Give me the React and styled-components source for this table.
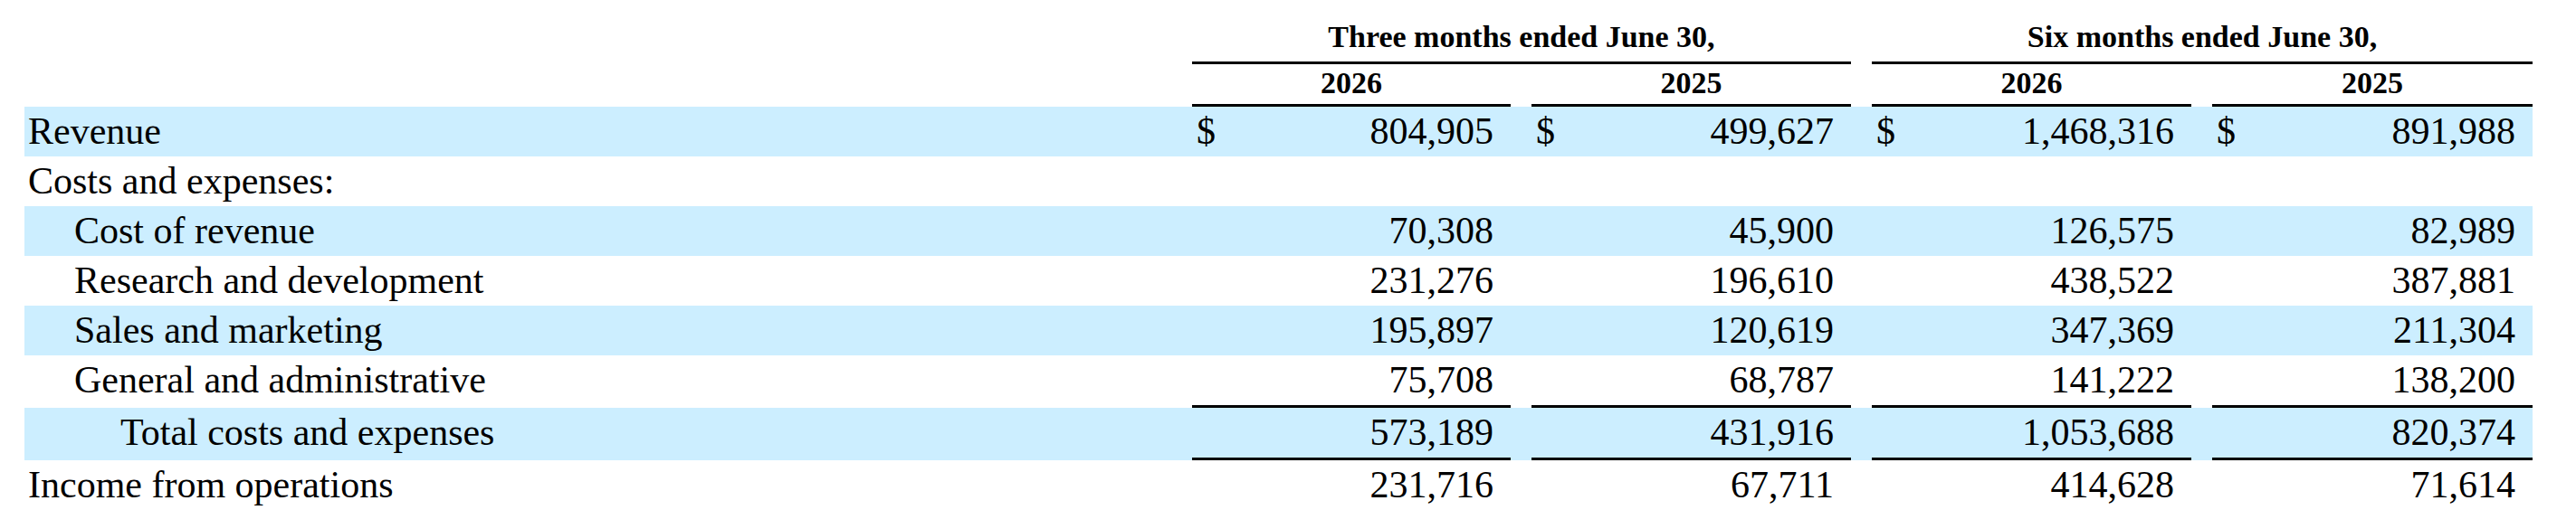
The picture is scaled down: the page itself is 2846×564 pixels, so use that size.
import styled, { createGlobalStyle } from "styled-components";
import * as React from "react";

const GlobalStyle = createGlobalStyle`
  html, body {
    margin: 0;
    padding: 0;
    background: #ffffff;
    overflow: hidden;
  }
  body {
    padding-left: 27px;
    font-family: "Liberation Serif", "Times New Roman", serif;
    color: #000;
  }
`;

const COLS = "1290px 352px 23px 353px 23px 353px 23px 354px";

const Table = styled.div`
  width: 2771px;
  display: flex;
  flex-direction: column;
`;

const HeadRow = styled.div`
  display: grid;
  grid-template-columns: ${COLS};
  font-weight: bold;
  font-size: 34px;
  line-height: 39px;
`;

const GroupTitle = styled.div`
  grid-column: ${(p) => p.$start} / span 3;
  height: 71px;
  box-sizing: border-box;
  padding-top: 21px;
  text-align: center;
  border-bottom: 3px solid #000;
`;

const YearCell = styled.div`
  grid-column: ${(p) => p.$col};
  height: 47px;
  box-sizing: border-box;
  padding-top: 1px;
  text-align: center;
  border-bottom: 3px solid #000;
`;

const Row = styled.div`
  display: grid;
  grid-template-columns: ${COLS};
  font-size: 42px;
  line-height: 55px;
  background: ${(p) => (p.$shaded ? "#cceeff" : "transparent")};
`;

const Label = styled.div`
  grid-column: 1;
  padding-left: ${(p) => 4 + p.$indent * 51}px;
  white-space: nowrap;
`;

const Cell = styled.div`
  grid-column: ${(p) => p.$col};
  display: flex;
  justify-content: space-between;
  padding: 0 19px 0 5px;
  height: ${(p) => (p.$rule ? 58 : 55)}px;
  box-sizing: border-box;
  border-bottom: ${(p) => (p.$rule ? "3px solid #000" : "none")};
`;

const Dollar = styled.span``;

const Amount = styled.span`
  text-align: right;
`;

const rows = [
  { label: "Revenue", indent: 0, dollar: true, values: ["804,905", "499,627", "1,468,316", "891,988"] },
  { label: "Costs and expenses:", indent: 0, values: null },
  { label: "Cost of revenue", indent: 1, values: ["70,308", "45,900", "126,575", "82,989"] },
  { label: "Research and development", indent: 1, values: ["231,276", "196,610", "438,522", "387,881"] },
  { label: "Sales and marketing", indent: 1, values: ["195,897", "120,619", "347,369", "211,304"] },
  { label: "General and administrative", indent: 1, rule: true, values: ["75,708", "68,787", "141,222", "138,200"] },
  { label: "Total costs and expenses", indent: 2, rule: true, values: ["573,189", "431,916", "1,053,688", "820,374"] },
  { label: "Income from operations", indent: 0, values: ["231,716", "67,711", "414,628", "71,614"] },
];

const dataCols = [2, 4, 6, 8];

function App() {
  return (
    <>
      <GlobalStyle />
      <Table>
        <HeadRow>
          <GroupTitle $start={2}>Three months ended June 30,</GroupTitle>
          <GroupTitle $start={6}>Six months ended June 30,</GroupTitle>
        </HeadRow>
        <HeadRow>
          <YearCell $col={2}>2026</YearCell>
          <YearCell $col={4}>2025</YearCell>
          <YearCell $col={6}>2026</YearCell>
          <YearCell $col={8}>2025</YearCell>
        </HeadRow>
        {rows.map((r, idx) => (
          <Row key={idx} $shaded={idx % 2 === 0}>
            <Label $indent={r.indent}>{r.label}</Label>
            {r.values &&
              r.values.map((v, i) => (
                <Cell key={i} $col={dataCols[i]} $rule={r.rule}>
                  <Dollar>{r.dollar ? "$" : ""}</Dollar>
                  <Amount>{v}</Amount>
                </Cell>
              ))}
          </Row>
        ))}
      </Table>
    </>
  );
}

export default App;
